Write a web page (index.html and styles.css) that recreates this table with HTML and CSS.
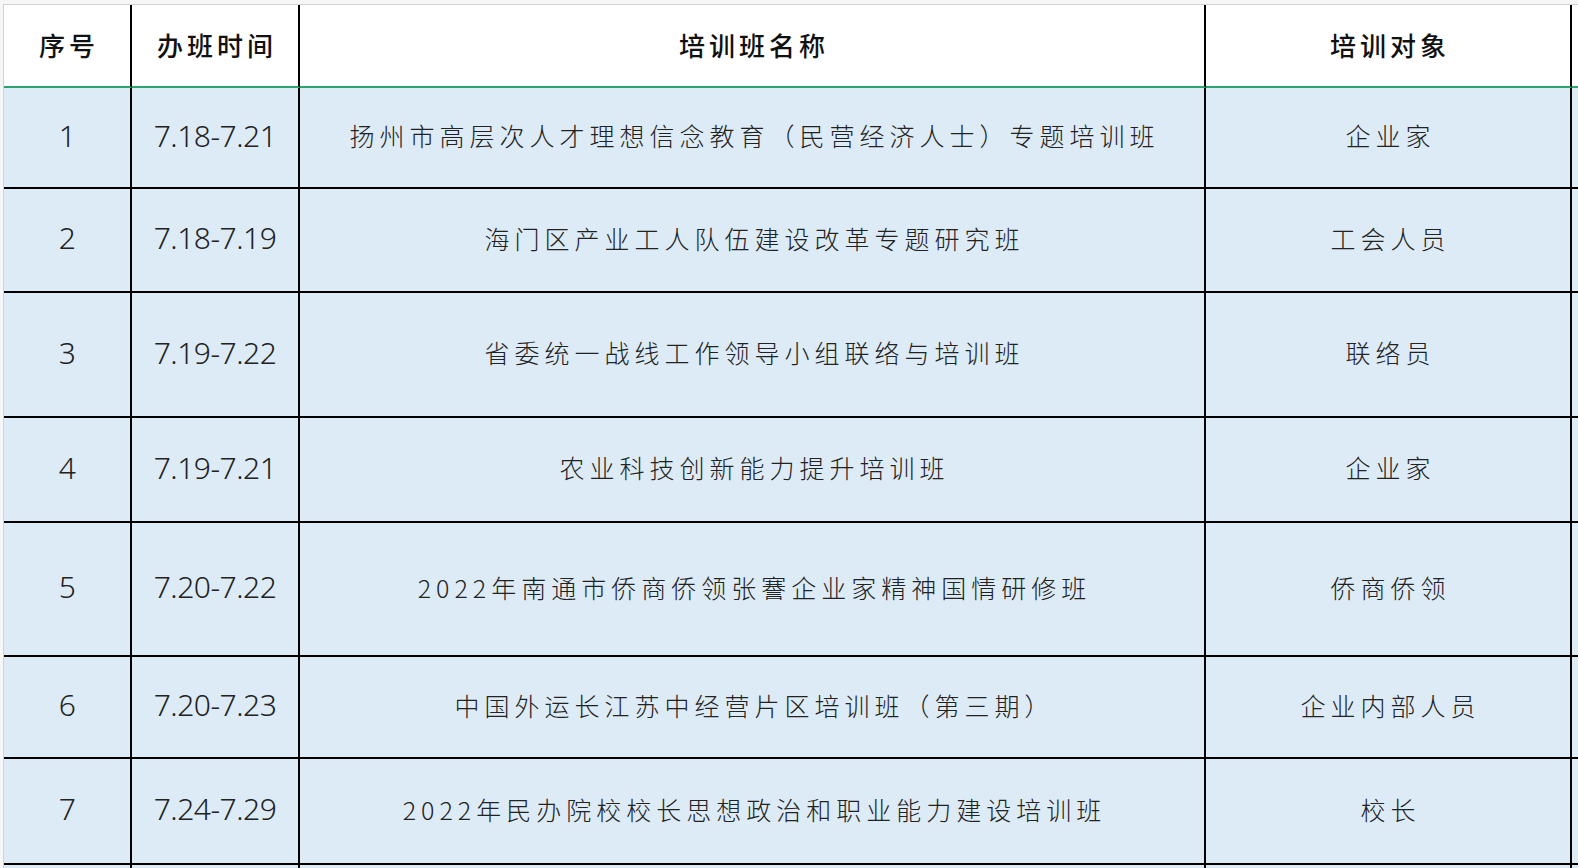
FILE: index.html
```html
<!DOCTYPE html>
<html lang="zh-CN">
<head>
<meta charset="utf-8">
<title>培训班安排</title>
<link rel="stylesheet" href="styles.css">
</head>
<body>
<div class="sheet">
  <div class="grid">
    <div class="cell head c1">序号</div>
    <div class="cell head c2">办班时间</div>
    <div class="cell head c3">培训班名称</div>
    <div class="cell head c4">培训对象</div>
    <div class="cell head fill"></div>

    <div class="cell num c1">1</div>
    <div class="cell num c2">7.18-7.21</div>
    <div class="cell txt c3">扬州市高层次人才理想信念教育（民营经济人士）专题培训班</div>
    <div class="cell txt c4">企业家</div>
    <div class="cell fill"></div>

    <div class="cell num c1">2</div>
    <div class="cell num c2">7.18-7.19</div>
    <div class="cell txt c3">海门区产业工人队伍建设改革专题研究班</div>
    <div class="cell txt c4">工会人员</div>
    <div class="cell fill"></div>

    <div class="cell num c1">3</div>
    <div class="cell num c2">7.19-7.22</div>
    <div class="cell txt c3">省委统一战线工作领导小组联络与培训班</div>
    <div class="cell txt c4">联络员</div>
    <div class="cell fill"></div>

    <div class="cell num c1">4</div>
    <div class="cell num c2">7.19-7.21</div>
    <div class="cell txt c3">农业科技创新能力提升培训班</div>
    <div class="cell txt c4">企业家</div>
    <div class="cell fill"></div>

    <div class="cell num c1">5</div>
    <div class="cell num c2">7.20-7.22</div>
    <div class="cell txt c3">2022年南通市侨商侨领张謇企业家精神国情研修班</div>
    <div class="cell txt c4">侨商侨领</div>
    <div class="cell fill"></div>

    <div class="cell num c1">6</div>
    <div class="cell num c2">7.20-7.23</div>
    <div class="cell txt c3">中国外运长江苏中经营片区培训班（第三期）</div>
    <div class="cell txt c4">企业内部人员</div>
    <div class="cell fill"></div>

    <div class="cell num c1">7</div>
    <div class="cell num c2">7.24-7.29</div>
    <div class="cell txt c3">2022年民办院校校长思想政治和职业能力建设培训班</div>
    <div class="cell txt c4">校长</div>
    <div class="cell fill"></div>

    <div class="cell c1 empty"></div>
    <div class="cell c2 empty"></div>
    <div class="cell c3 empty"></div>
    <div class="cell c4 empty"></div>
    <div class="cell fill"></div>
  </div>
</div>
</body>
</html>
```

FILE: styles.css
```css
html, body {
  margin: 0;
  padding: 0;
  height: 100%;
  overflow: hidden;
  background: #f6f6f6;
}

.sheet {
  padding: 4px 0 0 3px;
  height: 100%;
  box-sizing: border-box;
}

.grid {
  display: grid;
  grid-template-columns: 128px 168px 906px 366px 1fr;
  grid-template-rows: 83px 101px 104px 125px 105px 134px 102px 106px 40px;
  border-top: 1px solid #d2d2d2;
  border-left: 1px solid #d2d2d2;
  background: #ddebf7;
}

.cell {
  display: flex;
  align-items: center;
  justify-content: center;
  background: #ddebf7;
  border-right: 2px solid #000;
  border-bottom: 2px solid #000;
  color: #1c1c1c;
  white-space: nowrap;
  padding-bottom: 5px;
  box-sizing: border-box;
}

.cell.fill {
  border-right: none;
}

.cell.head {
  background: #fff;
  border-bottom: 2px solid #2fa36f;
  font-family: "Noto Sans CJK SC", "Noto Sans", sans-serif;
  font-weight: 500;
  font-size: 26px;
  letter-spacing: 4px;
  color: #111;
  padding-bottom: 3px;
  padding-left: 4px;
}

.cell.num {
  font-family: "Noto Sans", "Noto Sans CJK SC", sans-serif;
  font-weight: 300;
  font-size: 30px;
  letter-spacing: -0.5px;
  color: #222;
}

.cell.txt {
  font-family: "Noto Sans CJK SC", sans-serif;
  font-weight: 300;
  font-size: 25px;
  letter-spacing: 5px;
  padding-left: 5px;
  color: #222;
}

.cell.empty {
  border-bottom: none;
}
```
